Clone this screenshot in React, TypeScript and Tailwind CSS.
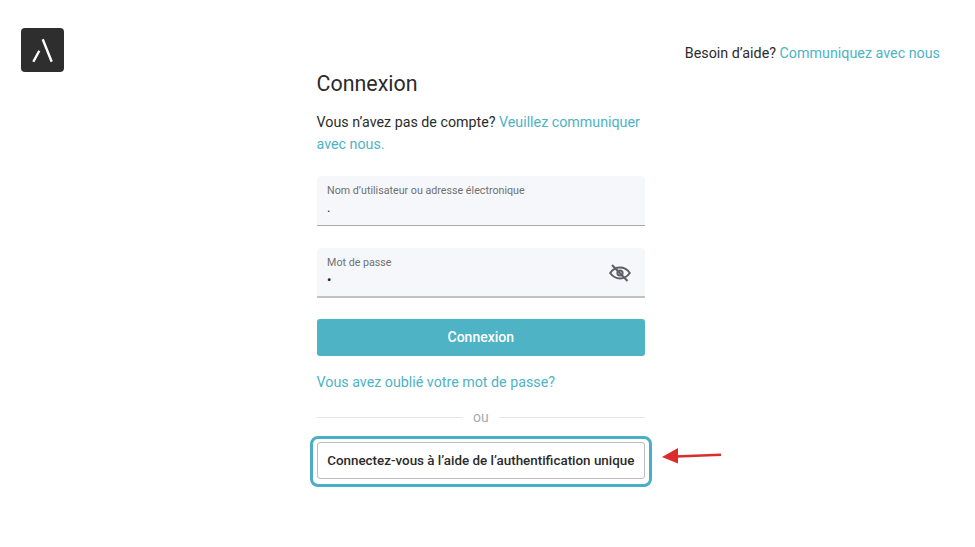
import React from "react";

const Logo = () => (
	<div className="w-[43px] h-[44px] rounded-[4px] bg-[#2e2e2e] flex items-center justify-center">
		<svg width="43" height="44" viewBox="0 0 43 44">
			<path d="M21.7 11.3 L30.7 33.7 M18.3 22.7 L12.3 33.7" stroke="#fff" strokeWidth="2.4" fill="none" />
		</svg>
	</div>
);

const EyeOff = () => (
	<svg width="22" height="18" viewBox="0 0 22 18" fill="none" stroke="#5c6066" strokeWidth="2">
		<path d="M1.2 9 C4 5 7.5 3.6 11 3.6 C14.5 3.6 18 5 20.8 9 C18 13 14.5 14.4 11 14.4 C7.5 14.4 4 13 1.2 9 Z" />
		<circle cx="11" cy="9" r="2.6" />
		<path d="M3 1 L18.5 17" />
	</svg>
);

const Field = ({ label, dot, icon }: { label: string; dot: string; icon?: boolean }) => (
	<div
		className={`relative h-[50px] bg-[#f6f7fb] rounded-t-[4px] px-[10.5px] pt-[8px] ${
			icon ? "border-b-2 border-[#c2c2c2]" : "border-b border-[#a9a9a9]"
		}`}
	>
		<div className="text-[10.7px] leading-[14px] text-[#707070]">{label}</div>
		<div className="text-[13px] leading-[18px] text-[#222] mt-[1px]">{dot}</div>
		{icon && (
			<div className="absolute right-[14px] top-[16px]">
				<EyeOff />
			</div>
		)}
	</div>
);

export default function App() {
	return (
		<div className="relative w-[975px] h-[547px] bg-white overflow-hidden font-['Roboto',sans-serif] text-[#2b2b2b]">
			<div className="absolute left-[21px] top-[28px]">
				<Logo />
			</div>
			<div className="absolute right-[35px] top-[44px] text-[14.3px] leading-[18px]">
				Besoin d’aide? <span className="text-[#4db3c5]">Communiquez avec nous</span>
			</div>

			<div className="ml-[316.6px] w-[328.4px] pt-[70px]">
				<h1 className="text-[21.4px] leading-[27px]">Connexion</h1>
				<p className="mt-[14px] text-[14.25px] leading-[22px]">
					Vous n’avez pas de compte? <span className="text-[#4db3c5]">Veuillez communiquer avec nous.</span>
				</p>
				<div className="mt-[21px]">
					<Field label="Nom d’utilisateur ou adresse électronique" dot="." />
				</div>
				<div className="mt-[22px]">
					<Field label="Mot de passe" dot="•" icon />
				</div>
				<button className="mt-[21px] w-full h-[37px] rounded-[3px] bg-[#4db3c5] text-white text-[14px] font-medium">
					Connexion
				</button>
				<div className="mt-[17px] text-[14.25px] leading-[18px] text-[#4db3c5]">Vous avez oublié votre mot de passe?</div>
				<div className="mt-[17px] flex items-center gap-[10px]">
					<div className="flex-1 h-px bg-[#e6e6e6]" />
					<span className="text-[14px] leading-[18px] text-[#ababab]">ou</span>
					<div className="flex-1 h-px bg-[#e6e6e6]" />
				</div>
				<div className="relative mt-[16px]">
					<button className="w-full h-[37px] pt-[1px] rounded-[3px] border border-[#bdbdbd] bg-white text-[13.4px] font-medium text-[#2b2b2b]">
						Connectez-vous à l’aide de l’authentification unique
					</button>
					<div className="absolute -inset-x-[7px] -top-[6px] -bottom-[8px] rounded-[8px] border-[3px] border-[#4aafc2]" />
					<svg className="absolute left-[345px] top-[6px]" width="60" height="16" viewBox="0 0 60 16">
						<path d="M59 6.8 L14 8.5" stroke="#dc2b2b" strokeWidth="2.5" />
						<path d="M0 9 L16 0 L16 15.5 Z" fill="#dc2b2b" />
					</svg>
				</div>
			</div>
		</div>
	);
}
